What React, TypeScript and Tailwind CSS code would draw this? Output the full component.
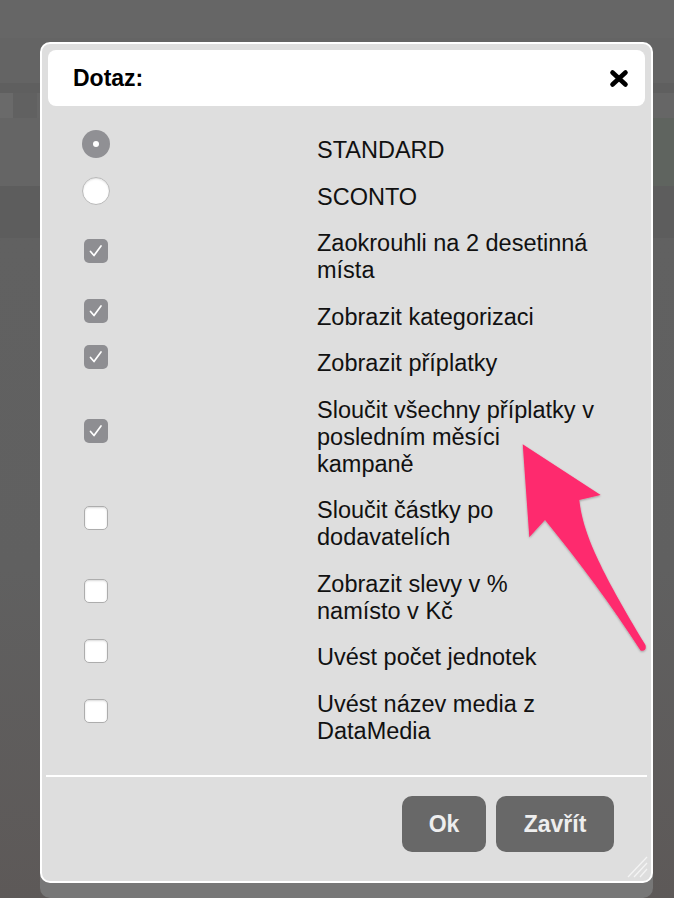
import clsx from "clsx"

type Option = {
  type: "radio" | "checkbox"
  checked: boolean
  lines: string[]
}

const OPTIONS: Option[] = [
  { type: "radio", checked: true, lines: ["STANDARD"] },
  { type: "radio", checked: false, lines: ["SCONTO"] },
  { type: "checkbox", checked: true, lines: ["Zaokrouhli na 2 desetinná", "místa"] },
  { type: "checkbox", checked: true, lines: ["Zobrazit kategorizaci"] },
  { type: "checkbox", checked: true, lines: ["Zobrazit příplatky"] },
  {
    type: "checkbox",
    checked: true,
    lines: ["Sloučit všechny příplatky v", "posledním měsíci", "kampaně"],
  },
  { type: "checkbox", checked: false, lines: ["Sloučit částky po", "dodavatelích"] },
  { type: "checkbox", checked: false, lines: ["Zobrazit slevy v %", "namísto v Kč"] },
  { type: "checkbox", checked: false, lines: ["Uvést počet jednotek"] },
  { type: "checkbox", checked: false, lines: ["Uvést název media z", "DataMedia"] },
]

const Checkmark = () => (
  <svg className="size-[24px]" viewBox="0 0 24 24" fill="none" stroke="white" strokeWidth={1.7}>
    <polyline points="6.5 12.5 10 16.5 17 7" strokeLinecap="round" strokeLinejoin="round" />
  </svg>
)

const Control = ({ type, checked }: { type: Option["type"]; checked: boolean }) => {
  if (type === "radio") {
    return (
      <span
        className={clsx(
          "flex size-[28px] items-center justify-center rounded-full",
          checked
            ? "bg-[#909094]"
            : "border border-[#b9b9b9] bg-white shadow-[inset_0_1px_2px_rgba(0,0,0,0.12)]",
        )}
      >
        {checked && <span className="size-[6px] rounded-full bg-white" />}
      </span>
    )
  }

  return (
    <span
      className={clsx(
        "flex size-[24px] items-center justify-center rounded-[5px]",
        checked
          ? "bg-[#8e8e92]"
          : "border border-[#adadad] bg-white shadow-[inset_0_1px_2px_rgba(0,0,0,0.15)]",
      )}
    >
      {checked && <Checkmark />}
    </span>
  )
}

const CloseIcon = () => (
  <svg className="h-[19px] w-[20px]" viewBox="0 0 20 19" fill="none" stroke="black" strokeWidth={4.6} strokeLinecap="round">
    <line x1="3.5" y1="3.5" x2="16.5" y2="15.5" />
    <line x1="16.5" y1="3.5" x2="3.5" y2="15.5" />
  </svg>
)

const ResizeGrip = () => (
  <svg className="h-[24px] w-[22px]" viewBox="0 0 22 24" stroke="#f4f4f4" strokeWidth={1.2}>
    <line x1="2" y1="23" x2="21" y2="3" />
    <line x1="8" y1="23" x2="21" y2="9" />
    <line x1="14" y1="23" x2="21" y2="15" />
  </svg>
)

const Arrow = () => (
  <svg
    className="pointer-events-none absolute inset-0 h-[898px] w-[674px]"
    viewBox="0 0 674 898"
  >
    <defs>
      <filter id="arrow-shadow" x="-20%" y="-20%" width="140%" height="140%">
        <feDropShadow dx="0" dy="1" stdDeviation="1.2" floodColor="#000" floodOpacity="0.3" />
      </filter>
    </defs>
    <path
      filter="url(#arrow-shadow)"
      fill="#fe2c6e"
      d="M522.7 444.3 L600.7 495 L579.3 500 C583 532 598 566 645.5 645 Q647 652 640.5 650.5 C612 606 580 563 545 520 L529.3 537.3 Z"
    />
  </svg>
)

const Background = () => (
  <div className="flex h-full flex-col">
    <div className="h-[38px] bg-[#666666]" />
    <div className="h-[45px] bg-[#646464]" />
    <div className="h-[10px] bg-[#5f5f5f]" />
    <div className="flex h-[25px] bg-[#666666]">
      <div className="w-[13px] bg-[#6a6a6a]" />
      <div className="w-[24px] bg-[#616161]" />
    </div>
    <div className="flex h-[68px] bg-[#656565]">
      <div className="flex-1" />
      <div className="w-[22px] bg-[#5f645f]" />
    </div>
    <div className="h-[52px] bg-[#5d5d5d]" />
    <div className="flex-1 bg-gradient-to-b from-[#616161] via-[#606060] to-[#5d5958]" />
  </div>
)

export default function App() {
  return (
    <div
      className="relative h-[898px] w-[674px] overflow-hidden bg-[#606060] text-[#111]"
      style={{ fontFamily: '"Liberation Sans", Arial, sans-serif' }}
    >
      <Background />

      <div className="absolute left-[40px] top-[42px] flex h-[841px] w-[613px] flex-col rounded-[10px] border-2 border-white bg-[#dedede] shadow-[0_15px_0_#777777]">
        <div className="mx-[6px] mt-[6px] flex h-[56px] items-center justify-between rounded-[8px] bg-white pl-[25px] pr-[16px]">
          <span className="text-[23px] font-bold text-black">Dotaz:</span>
          <CloseIcon />
        </div>

        <div className="mt-[18px] flex flex-col gap-[6.5px]">
          {OPTIONS.map((opt, i) => (
            <div key={i} className="flex items-center">
              <div className="w-[275px] pl-[40px]">
                <div className="flex w-[28px] justify-center">
                  <Control type={opt.type} checked={opt.checked} />
                </div>
              </div>
              <div className="pt-[13px] text-[23.5px] leading-[27px]">
                {opt.lines.map((line) => (
                  <div key={line} className="whitespace-nowrap">
                    {line}
                  </div>
                ))}
              </div>
            </div>
          ))}
        </div>

        <div className="mx-[4px] mt-auto h-[2px] bg-white" />

        <div className="relative flex justify-end gap-[10px] pb-[29px] pr-[37px] pt-[19px]">
          <button className="h-[56px] w-[84px] rounded-[10px] bg-[#686868] text-[23px] font-bold text-[#eeeeee]">
            Ok
          </button>
          <button className="h-[56px] w-[118px] rounded-[10px] bg-[#686868] text-[23px] font-bold text-[#eeeeee]">
            Zavřít
          </button>
          <div className="absolute bottom-[3px] right-[3px]">
            <ResizeGrip />
          </div>
        </div>
      </div>

      <Arrow />
    </div>
  )
}
